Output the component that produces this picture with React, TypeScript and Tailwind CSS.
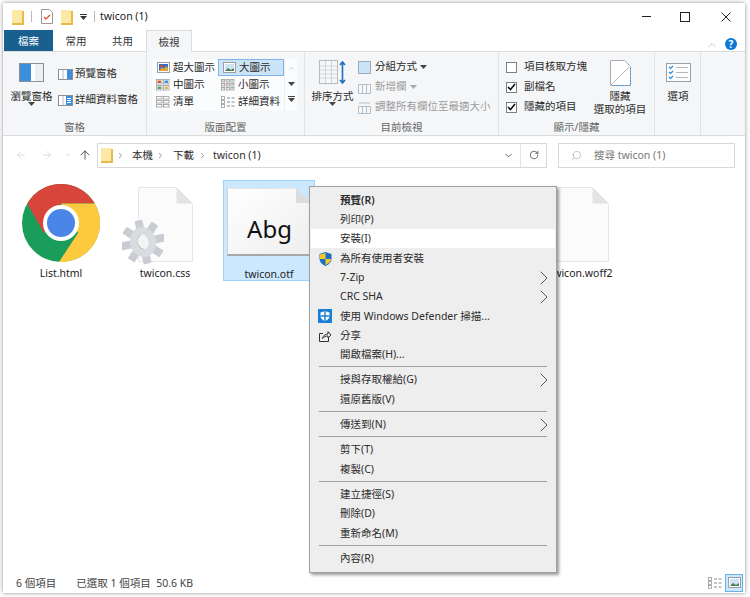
import { ReactNode } from "react";
import { ChevronRight, ChevronDown, ChevronUp, ArrowLeft, ArrowRight, ArrowUp, RotateCw, Search } from "lucide-react";

const Folder = () => (
  <svg width="12" height="16" viewBox="0 0 12 16">
    <path d="M0 1h8l1 1h3v14H0z" fill="#f9d976" />
    <path d="M0 1h10v13H0z" fill="#fde9a6" />
    <path d="M10 2h2v14H0v-2h10z" fill="#e9b949" />
  </svg>
);

const Caret = ({ color = "#444" }: { color?: string }) => (
  <svg width="7" height="4" viewBox="0 0 7 4"><path d="M0 0h7L3.5 4z" fill={color} /></svg>
);

const Pane = ({ right }: { right?: boolean }) => (
  <svg width="15" height="11" viewBox="0 0 15 11">
    <rect x=".5" y=".5" width="14" height="10" fill="#fff" stroke="#8b8f96" />
    <rect x={right ? 8 : 9} y="1" width={right ? 6 : 5} height="9" fill="#3c8fdc" />
    <path d="M5 1v9" stroke="#b9bcc2" />
    {right && <path d="M9 3.5h4M9 5.5h4M9 7.5h4" stroke="#fff" />}
  </svg>
);

const Thumb = ({ photo }: { photo?: boolean }) => (
  <svg width="13" height="11" viewBox="0 0 13 11">
    <rect x=".5" y=".5" width="12" height="10" fill="#fff" stroke="#9a9ea5" />
    <rect x="2" y="2" width="9" height="7" fill={photo ? "#2f6fc4" : "#cfe3f5"} />
    {photo ? <path d="M2 9l3-4 2 2 2-3 2 2v3z" fill="#e8a32e" /> : <path d="M2 9l3-3 3 2 3-2v3z" fill="#4b7d55" />}
    {photo && <rect x="3" y="3" width="3" height="2" fill="#d8453b" />}
  </svg>
);

const dotColors = ["#e0552f", "#3c8fdc", "#5aa469", "#e9b949"];

const Grid = ({ cols, rows, color, dots }: { cols: number; rows: number; color: string; dots?: boolean }) => (
  <svg width="14" height="12" viewBox="0 0 14 12">
    {Array.from({ length: cols * rows }).map((_, i) => (
      <g key={i}>
        <rect x={0.5 + (i % cols) * (14 / cols)} y={0.5 + Math.floor(i / cols) * (12 / rows)} width={14 / cols - 1.5} height={12 / rows - 1.5} fill="#fff" stroke={color} strokeWidth=".8" />
        {dots && <rect x={1.5 + (i % cols) * (14 / cols)} y={1.5 + Math.floor(i / cols) * (12 / rows)} width={14 / cols - 3.5} height={12 / rows - 3.5} fill={dotColors[i % 4]} />}
      </g>
    ))}
  </svg>
);

const Lines = () => (
  <svg width="14" height="12" viewBox="0 0 14 12">
    {[0, 4, 8].map((y) => (
      <g key={y}>
        <rect x=".5" y={y + 0.5} width="3" height="3" fill="#fff" stroke="#999" strokeWidth=".8" />
        <path d={`M6 ${y + 2}h3M10.5 ${y + 2}h3`} stroke="#8a8a8a" />
      </g>
    ))}
  </svg>
);

const GalleryItem = ({ icon, label, selected }: { icon: ReactNode; label: string; selected?: boolean }) => (
  <div className={`flex h-[17px] items-center gap-[3px] pl-[3px] whitespace-nowrap ${selected ? "border border-[#7eb4ea] bg-[#cce4f7]" : ""}`}>
    <span className="flex w-[14px] shrink-0 justify-center">{icon}</span>
    <span>{label}</span>
  </div>
);

const Group = ({ width, label, children }: { width: number; label: string; children: ReactNode }) => (
  <div style={{ width }} className="flex h-full shrink-0 flex-col border-r border-[#e2e3e4]">
    <div className="h-[67px] flex">{children}</div>
    <div className="flex-1 text-center leading-[16px] text-[#666]">{label}</div>
  </div>
);

const CheckRow = ({ checked, label }: { checked?: boolean; label: string }) => (
  <div className="flex h-[20px] items-center gap-[7px]">
    <span className="flex size-[11px] items-center justify-center border border-[#7a8088] bg-white">
      {checked && (
        <svg width="9" height="8" viewBox="0 0 9 8"><path d="M1 4l2.5 2.5L8 1" fill="none" stroke="#111" strokeWidth="1.6" /></svg>
      )}
    </span>
    <span>{label}</span>
  </div>
);

const Doc = () => (
  <svg width="55" height="75" viewBox="0 0 55 75">
    <path d="M.5.5h38l16 16v58H.5z" fill="#fbfbfb" stroke="#e6e6e6" />
    <path d="M38.5.5v16h16z" fill="#e4e4e4" />
  </svg>
);

const Chrome = () => (
  <svg width="78" height="78" viewBox="0 0 78 78">
    <circle cx="39" cy="39" r="39" fill="#1a9d5b" />
    <path d="M39 19.5h33.8A39 39 0 0 0 5.2 19.5L22 49z" fill="#d8453b" />
    <path d="M39 19.5h33.8A39 39 0 0 1 37 78L56 49z" fill="#fdc93f" />
    <circle cx="39" cy="39" r="18" fill="#fff" />
    <circle cx="39" cy="39" r="14" fill="#4a86e8" />
  </svg>
);

const Gear = () => (
  <svg width="42" height="48" viewBox="0 0 42 48" className="absolute left-[-16px] top-[31px]">
    <g transform="rotate(-12 21 24)">
      {[0, 45, 90, 135, 180, 225, 270, 315].map((a) => (
        <rect key={a} x="17" y="2" width="8" height="10" rx="1" fill="#c9cdd3" transform={`rotate(${a} 21 24)`} />
      ))}
      <ellipse cx="21" cy="24" rx="13" ry="15" fill="#d8dbdf" />
      <ellipse cx="21" cy="24" rx="5.500" ry="7.500" fill="#f4f4f5" />
      <path d="M21 16.500a5.500 7.500 0 0 0 0 15 8 8 0 0 1 0-15z" fill="#8f9298" />
    </g>
  </svg>
);

const Tile = ({ label, selected, icon }: { label: string; selected?: boolean; icon?: ReactNode }) => (
  <div className="flex w-[104px] shrink-0 justify-center">
    <div className={`h-[101px] w-[92px] ${selected ? "border border-[#99d1ff] bg-[#cce8ff]" : ""}`}>
      <div className="relative flex h-[82px] items-end justify-center">{icon}</div>
      <div className="whitespace-nowrap text-center leading-[22px] text-[#222]">{label}</div>
    </div>
  </div>
);

const FontCard = () => (
  <div className="relative mb-[7px] flex h-[68px] w-[84px] items-center justify-center border-b-2 border-l border-t border-b-[#a8a8a8] border-l-[#d0d0d0] border-t-[#e4e4e4] bg-gradient-to-br from-white to-[#eeeeee] pt-[14px]">
    <span className="text-[24px] text-[#111] font-['Noto_Sans',sans-serif]">Abg</span>
    <svg width="15" height="15" viewBox="0 0 15 15" className="absolute right-0 top-[-1px]">
      <path d="M0 0h15v15z" fill="#cce8ff" />
      <path d="M0 0v15h15z" fill="#dcdcdc" />
    </svg>
  </div>
);

const ShareIcon = () => (
  <svg width="14" height="14" viewBox="0 0 14 14" fill="none" stroke="#333">
    <path d="M5 4.500H1.500v8h9V9" />
    <path d="M4.500 9.500c.5-3 3-4.500 5.500-4.500V2.500L13 6l-3 3V7c-2 0-4 .5-5.500 2.500z" />
  </svg>
);

const MenuItem = ({ label, bold, hot, arrow, icon }: { label: string; bold?: boolean; hot?: boolean; arrow?: boolean; icon?: ReactNode }) => (
  <div className={`relative flex h-[19.3px] items-center pl-[29px] pt-[2px] ${hot ? "bg-white" : ""} ${bold ? "font-semibold" : ""}`}>
    {icon && <span className="absolute left-[6px] flex size-[16px] items-center justify-center">{icon}</span>}
    <span className="whitespace-nowrap">{label}</span>
    {arrow && <ChevronRight size={24} strokeWidth={1} color="#555" className="absolute right-[-1px]" />}
  </div>
);

const MenuSep = () => (
  <div className="flex h-[6px] items-center px-[8px]"><div className="h-px w-full bg-[#a0a0a0]" /></div>
);

export default function App() {
  return (
    <div className="h-[597px] w-[750px] overflow-hidden bg-white pl-[3px] pt-[3px] text-[10.5px] text-[#2b2b2b] font-['Noto_Sans','Noto_Sans_CJK_TC',sans-serif]">
      <div className="relative flex h-[590px] w-[742px] flex-col bg-white shadow-[0_0_4px_rgba(0,0,0,0.45)]">
        {/* title bar */}
        <div className="flex h-[27px] shrink-0 items-center pl-[9px]">
          <Folder />
          <div className="ml-[7px] h-[11px] w-px bg-[#bbb]" />
          <svg width="12" height="15" viewBox="0 0 12 15" className="ml-[9px]">
            <path d="M.5.5h8l3 3v11H.5z" fill="#fff" stroke="#999" />
            <path d="M3 8l2 2 4-4" fill="none" stroke="#e0552f" strokeWidth="1.3" />
          </svg>
          <div className="ml-[8px]"><Folder /></div>
          <div className="ml-[7px] flex flex-col items-center gap-[1px]"><div className="h-px w-[7px] bg-[#333]" /><Caret color="#333" /></div>
          <div className="ml-[7px] h-[11px] w-px bg-[#bbb]" />
          <span className="ml-[5px] text-[10.5px] text-[#222]">twicon (1)</span>
          <div className="ml-auto flex items-center">
            <div className="h-px w-[9px] bg-[#222]" />
            <div className="ml-[29px] size-[10px] border border-[#222]" />
            <svg width="10" height="10" viewBox="0 0 10 10" className="ml-[31px] mr-[14px]"><path d="M.5.5l9 9M9.500.5l-9 9" stroke="#222" /></svg>
          </div>
        </div>
        {/* tabs */}
        <div className="flex h-[22px] shrink-0 items-end border-b border-[#dadbdc] pl-[1px] text-[#333]">
          <div className="flex h-[21px] w-[49px] items-center justify-center bg-[#19608f] pt-[2px] text-white">檔案</div>
          <div className="flex h-[21px] w-[46px] items-center justify-center pt-[2px]">常用</div>
          <div className="flex h-[21px] w-[47px] items-center justify-center pt-[2px]">共用</div>
          <div className="-mb-px flex h-[22px] w-[46px] items-center justify-center border border-b-0 border-[#dadbdc] bg-[#f5f6f7] pt-[2px]">檢視</div>
          <div className="ml-auto mr-[8px] flex items-center gap-[7px]">
            <ChevronUp size={12} strokeWidth={1} color="#888" />
            <div className="mb-[1px] flex size-[12px] items-center justify-center rounded-full bg-[#0a78d4] text-[10px] font-bold text-white">?</div>
          </div>
        </div>
        {/* ribbon */}
        <div className="flex h-[84px] shrink-0 border-b border-[#dadbdc] bg-[#f5f6f7]">
          <Group width={144} label="窗格">
            <div className="flex w-[55px] flex-col items-center pl-[2px] pt-[11px]">
              <svg width="25" height="19" viewBox="0 0 25 19">
                <rect x=".5" y=".5" width="24" height="18" fill="#fff" stroke="#8b8f96" />
                <rect x="1" y="1" width="11" height="17" fill="#3c8fdc" />
                <rect x="16" y="1" width="8" height="17" fill="#eceef0" />
              </svg>
              <span className="mt-[7px] whitespace-nowrap leading-[14px]">瀏覽窗格</span>
              <div className="-mt-px"><Caret /></div>
            </div>
            <div className="flex flex-col">
              <div className="mt-[13px] flex h-[18px] items-center gap-[2px]"><Pane /><span>預覽窗格</span></div>
              <div className="mt-[8px] flex h-[18px] items-center gap-[2px] whitespace-nowrap"><Pane right /><span>詳細資料窗格</span></div>
            </div>
          </Group>
          <Group width={158} label="版面配置">
            <div className="ml-[5px] mt-[7px] flex h-[52px] w-[145px] bg-[#fbfcfd] pl-px">
              <div className="w-[65px]">
                <GalleryItem label="超大圖示" icon={<Thumb photo />} />
                <GalleryItem label="中圖示" icon={<Grid cols={2} rows={2} color="#9a9ea5" dots />} />
                <GalleryItem label="清單" icon={<Grid cols={2} rows={3} color="#999" />} />
              </div>
              <div className="w-[66px]">
                <GalleryItem selected label="大圖示" icon={<Thumb />} />
                <GalleryItem label="小圖示" icon={<Grid cols={3} rows={3} color="#999" dots />} />
                <GalleryItem label="詳細資料" icon={<Lines />} />
              </div>
              <div className="flex w-[13px] flex-col items-center gap-[10px] border-l border-[#eceef0] pt-[6px]">
                <ChevronUp size={7} color="#aaa" />
                <Caret />
                <div className="flex flex-col items-center gap-[1px]"><div className="h-px w-[7px] bg-[#444]" /><Caret /></div>
              </div>
            </div>
          </Group>
          <Group width={194} label="目前檢視">
            <div className="flex w-[53px] flex-col items-center pl-[2px] pt-[8px]">
              <svg width="28" height="25" viewBox="0 0 28 25">
                <rect x=".5" y=".5" width="18" height="23" fill="#f7f8f9" stroke="#bbb" />
                <path d="M1 6h17M1 10h17M1 14h17M1 18h17M6.500 1v22M12.500 1v22" stroke="#cfd2d6" />
                <path d="M23.500 2v21M21 5l2.500-3 2.500 3M21 20l2.500 3 2.500-3" fill="none" stroke="#1f6fc0" strokeWidth="1.6" />
              </svg>
              <span className="mt-[4px] whitespace-nowrap leading-[14px]">排序方式</span>
              <div className="-mt-px"><Caret /></div>
            </div>
            <div className="flex flex-col pt-[5px] whitespace-nowrap">
              <div className="flex h-[20px] items-center gap-[4px]">
                <svg width="13" height="13" viewBox="0 0 13 13"><rect x=".5" y=".5" width="12" height="12" fill="#cde4f8" stroke="#9ab" /></svg>
                <span>分組方式</span><div className="-ml-[1px]"><Caret /></div>
              </div>
              <div className="flex h-[20px] items-center gap-[4px] text-[#9c9c9c]">
                <svg width="13" height="13" viewBox="0 0 13 13"><path d="M.5 3.500h12v9H.500zM4.500 3.500v9M8.500 3.500v9" fill="#f7f8f9" stroke="#aebfcc" /></svg>
                <span>新增欄</span><div className="-ml-[1px]"><Caret color="#aaa" /></div>
              </div>
              <div className="flex h-[20px] items-center gap-[4px] text-[#9c9c9c]">
                <svg width="13" height="13" viewBox="0 0 13 13"><path d="M.5 5.500h12v7H.500zM4.500 5.500v7M8.500 5.500v7M1 2h11" fill="#f7f8f9" stroke="#aebfcc" /></svg>
                <span>調整所有欄位至最適大小</span>
              </div>
            </div>
          </Group>
          <Group width={156} label="顯示/隱藏">
            <div className="flex w-[91px] flex-col pl-[7px] pt-[5px]">
              <CheckRow label="項目核取方塊" />
              <CheckRow checked label="副檔名" />
              <CheckRow checked label="隱藏的項目" />
            </div>
            <div className="flex w-[60px] flex-col items-center pt-[8px] text-center leading-[13px]">
              <svg width="21" height="26" viewBox="0 0 21 26">
                <path d="M.5.500h14l6 6v19H.500z" fill="#fff" stroke="#a9adb3" />
                <path d="M20.500 8v17.500H3" fill="none" stroke="#3c8fdc" strokeDasharray="1.5 1.500" />
                <path d="M1 25L19 7" stroke="#b5b8bd" />
              </svg>
              <span className="mt-[4px]">隱藏</span>
              <span className="whitespace-nowrap">選取的項目</span>
            </div>
          </Group>
          <Group width={46} label="">
            <div className="flex w-full flex-col items-center pl-[1px] pt-[11px]">
              <svg width="25" height="19" viewBox="0 0 25 19">
                <rect x=".5" y=".5" width="24" height="18" fill="#fcfcfc" stroke="#9aa0a6" />
                <path d="M3 4l1.500 1.500L7 3M3 9l1.500 1.500L7 8M3 14l1.500 1.500L7 13" fill="none" stroke="#2d89d8" strokeWidth="1.200" />
                <path d="M10 4.500h12M10 9.500h12M10 14.500h12" stroke="#b5b8bd" />
              </svg>
              <span className="mt-[7px]">選項</span>
            </div>
          </Group>
        </div>
        {/* address row */}
        <div className="flex h-[36px] shrink-0 items-center pl-[12px] pr-[10px] pt-[2px]">
          <ArrowLeft size={12} color="#c8c8c8" strokeWidth={1.2} />
          <ArrowRight size={12} color="#c8c8c8" strokeWidth={1.2} className="ml-[14px]" />
          <ChevronDown size={8} color="#c8c8c8" className="ml-[11px]" />
          <ArrowUp size={14} color="#444" strokeWidth={1.5} className="ml-[6px]" />
          <div className="ml-[5px] flex h-[25px] w-[450px] items-center border border-[#d9d9d9] pl-[3px]">
            <Folder />
            <ChevronRight size={9} color="#777" className="ml-[3px]" />
            <span className="ml-[7px] pt-px">本機</span>
            <ChevronRight size={9} color="#777" className="ml-[3px]" />
            <span className="ml-[8px] pt-px">下載</span>
            <ChevronRight size={9} color="#777" className="ml-[4px]" />
            <span className="ml-[6px] pt-px">twicon (1)</span>
            <ChevronDown size={11} color="#555" className="ml-auto mr-[6px]" />
            <div className="flex h-full w-[26px] items-center justify-center border-l border-[#e5e5e5]">
              <RotateCw size={10} color="#555" />
            </div>
          </div>
          <div className="ml-[11px] flex h-[25px] w-[177px] items-center border border-[#d9d9d9] pl-[12px] text-[#777]">
            <Search size={11} color="#999" className="-scale-x-100" strokeWidth={1.2} />
            <span className="ml-[12px] pt-px">搜尋 twicon (1)</span>
          </div>
        </div>
        {/* files */}
        <div className="flex flex-1 pl-[6px] pt-[8px]">
          <Tile label="List.html" icon={<Chrome />} />
          <Tile label="twicon.css" icon={<div className="relative"><Doc /><Gear /></div>} />
          <Tile label="twicon.otf" selected icon={<FontCard />} />
          <Tile label="" />
          <Tile label="" />
          <Tile label="twicon.woff2" icon={<Doc />} />
        </div>
        {/* status bar */}
        <div className="flex h-[22px] shrink-0 items-center pl-[13px] text-[#444]">
          <span className="pt-[3px]">6 個項目</span>
          <span className="ml-[20px] pt-[3px]">已選取 1 個項目&nbsp;&nbsp;50.6 KB</span>
          <div className="ml-auto mr-[2px] flex items-center gap-[3px] pt-[1px]">
            <Lines />
            <div className="flex size-[18px] items-center justify-center border border-[#66b0e8] bg-[#cce8ff]"><Thumb /></div>
          </div>
        </div>
        {/* context menu */}
        <div className="absolute left-[306px] top-[183px] h-[387px] w-[248px] border border-[#a0a0a0] bg-[#eeeeee] px-px pt-[3px] text-[#2b2b2b] shadow-[2px_2px_3px_rgba(0,0,0,0.4)]">
          <MenuItem bold label="預覽(R)" />
          <MenuItem label="列印(P)" />
          <MenuItem hot label="安裝(I)" />
          <MenuItem
            label="為所有使用者安裝"
            icon={
              <svg width="13" height="14" viewBox="0 0 13 14">
                <path d="M6.500 0l6 2v5c0 3-2.500 5.500-6 7-3.500-1.500-6-4-6-7V2z" fill="#1d6fc4" />
                <path d="M6.500 1v6h5.500c0 3-2.500 4.500-5.500 6V7H1V2.500z" fill="#f8c62f" />
              </svg>
            }
          />
          <MenuItem arrow label="7-Zip" />
          <MenuItem arrow label="CRC SHA" />
          <MenuItem
            label="使用 Windows Defender 掃描..."
            icon={
              <svg width="14" height="14" viewBox="0 0 14 14">
                <rect width="14" height="14" fill="#1a7fd4" />
                <path d="M7 2l4.500 1.500V7c0 2.500-2 4-4.500 5-2.500-1-4.500-2.500-4.500-5V3.500z" fill="#fff" />
                <path d="M6.300 2v10h1.400V2zM2.500 6.300v1.400h9V6.300z" fill="#1a7fd4" />
              </svg>
            }
          />
          <MenuItem label="分享" icon={<ShareIcon />} />
          <MenuItem label="開啟檔案(H)..." />
          <MenuSep />
          <MenuItem arrow label="授與存取權給(G)" />
          <MenuItem label="還原舊版(V)" />
          <MenuSep />
          <MenuItem arrow label="傳送到(N)" />
          <MenuSep />
          <MenuItem label="剪下(T)" />
          <MenuItem label="複製(C)" />
          <MenuSep />
          <MenuItem label="建立捷徑(S)" />
          <MenuItem label="刪除(D)" />
          <MenuItem label="重新命名(M)" />
          <MenuSep />
          <MenuItem label="內容(R)" />
        </div>
      </div>
    </div>
  );
}
